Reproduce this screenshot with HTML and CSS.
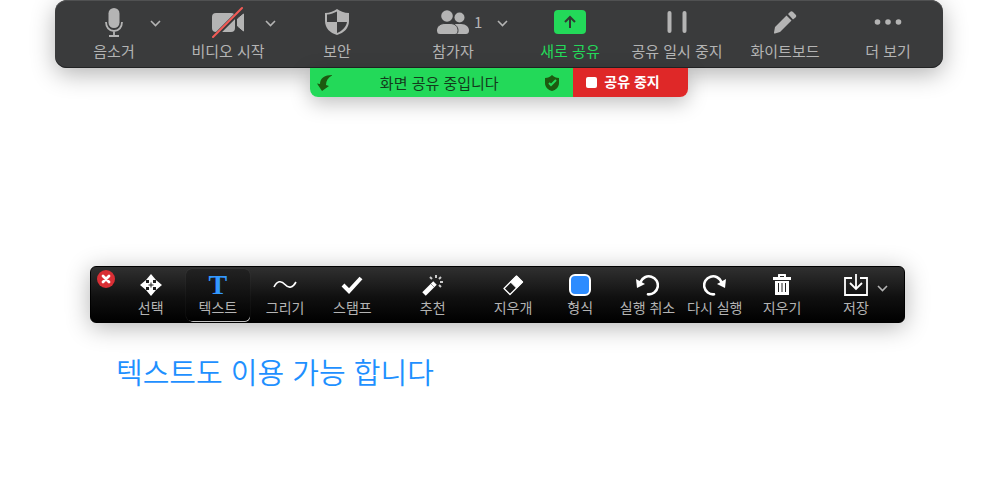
FILE: index.html
```html
<!DOCTYPE html>
<html lang="ko">

<head>
    <meta charset="UTF-8">
    <meta name="viewport" content="width=device-width, initial-scale=1.0">
    <title>화면 공유</title>
    <link rel="stylesheet" href="styles.css">
</head>

<body>
    <header class="meeting">
        <nav class="meeting-bar" aria-label="회의 컨트롤">
            <div class="control">
                <button type="button" class="control-main">
                    <span class="control-icon">
                        <svg width="22" height="32" viewBox="0 0 22 32">
                            <rect x="5.500" y="2" width="11" height="20" rx="5.500" fill="#b4b4b4" />
                            <path d="M3 16c0 5 3 9 8 9s8-4 8-9M11 25v4M6 30h10" fill="none" stroke="#b4b4b4" stroke-width="1.800" />
                        </svg>
                    </span>
                    <span class="control-label">음소거</span>
                </button>
                <button type="button" class="caret" aria-label="오디오 옵션">
                    <svg width="11" height="7" viewBox="0 0 11 7"><path d="M1 1l4.500 4.500L10 1" /></svg>
                </button>
            </div>
            <div class="control">
                <button type="button" class="control-main">
                    <span class="control-icon">
                        <svg width="34" height="32" viewBox="0 0 34 32">
                            <rect x="1" y="7" width="23" height="19" rx="4" fill="#b4b4b4" />
                            <path d="M26.500 13l6-5v17l-6-5z" fill="#b4b4b4" stroke="#b4b4b4" stroke-linejoin="round" />
                            <path d="M3 31L32 2" stroke="#3a3b3c" stroke-width="4.500" />
                            <path d="M2 31L31 2" stroke="#f25b56" stroke-width="2" stroke-linecap="round" />
                        </svg>
                    </span>
                    <span class="control-label">비디오 시작</span>
                </button>
                <button type="button" class="caret" aria-label="비디오 옵션">
                    <svg width="11" height="7" viewBox="0 0 11 7"><path d="M1 1l4.500 4.500L10 1" /></svg>
                </button>
            </div>
            <div class="control">
                <button type="button" class="control-main">
                    <span class="control-icon">
                        <svg width="26" height="28" viewBox="0 0 26 28">
                            <path d="M13 1c3 2 7 4 12 4v8c0 7-5 12-12 14C6 25 1 20 1 13V5c5 0 9-2 12-4z" fill="#b4b4b4" />
                            <path d="M13 3.500V14H3V6.500c4 0 7-1.500 10-3zM13 14h10c-1 5.500-5 9-10 11z" fill="#3a3b3c" />
                        </svg>
                    </span>
                    <span class="control-label">보안</span>
                </button>
            </div>
            <div class="control">
                <button type="button" class="control-main">
                    <span class="control-icon">
                        <svg width="32" height="24" viewBox="0 0 32 24">
                            <g fill="#b4b4b4">
                                <circle cx="22.500" cy="7.500" r="5" />
                                <path d="M18 14h6c5 0 8 3 8 6.500 0 2-1 3.500-3 3.500H18z" />
                                <path d="M8 13.500h5c5 0 8 3 8 7 0 2.500-1 4-3 4H3c-2 0-3.500-1.500-3.500-4 0-4 3.500-7 8.500-7z" stroke="#3a3b3c" />
                                <circle cx="10" cy="6" r="5.800" />
                            </g>
                        </svg>
                        <span class="count">1</span>
                    </span>
                    <span class="control-label">참가자</span>
                </button>
                <button type="button" class="caret caret-wide" aria-label="참가자 옵션">
                    <svg width="11" height="7" viewBox="0 0 11 7"><path d="M1 1l4.500 4.500L10 1" /></svg>
                </button>
            </div>
            <div class="control">
                <button type="button" class="control-main share">
                    <span class="control-icon">
                        <svg width="32" height="24" viewBox="0 0 32 24">
                            <rect width="32" height="24" rx="4" fill="#23d959" />
                            <path d="M16 18V7M11 12l5-5 5 5" fill="none" stroke="#303a32" stroke-width="2" />
                        </svg>
                    </span>
                    <span class="control-label">새로 공유</span>
                </button>
            </div>
            <div class="control">
                <button type="button" class="control-main">
                    <span class="control-icon">
                        <svg width="20" height="22" viewBox="0 0 20 22">
                            <rect x="0.500" y="0" width="4" height="22" rx="2" fill="#b4b4b4" />
                            <rect x="15.500" y="0" width="4" height="22" rx="2" fill="#b4b4b4" />
                        </svg>
                    </span>
                    <span class="control-label">공유 일시 중지</span>
                </button>
            </div>
            <div class="control">
                <button type="button" class="control-main">
                    <span class="control-icon">
                        <svg width="24" height="24" viewBox="0 0 24 24">
                            <path d="M2 17L13.500 5.500l5 5L7 22l-5 1.500c-1 0-1 0-1-1zM15 4l2-2c1-1 2-1 3 0l2.500 2.500c1 1 1 2 0 3L20 9.500z" fill="#b4b4b4" />
                        </svg>
                    </span>
                    <span class="control-label">화이트보드</span>
                </button>
            </div>
            <div class="control">
                <button type="button" class="control-main">
                    <span class="control-icon">
                        <svg width="28" height="6" viewBox="0 0 28 6" fill="#b4b4b4">
                            <circle cx="3.500" cy="3" r="2.800" />
                            <circle cx="14" cy="3" r="2.800" />
                            <circle cx="24.500" cy="3" r="2.800" />
                        </svg>
                    </span>
                    <span class="control-label">더 보기</span>
                </button>
            </div>
        </nav>
        <div class="share-status">
            <div class="share-info">
                <svg width="16" height="16" viewBox="0 0 16 16">
                    <path d="M15 0C8 0 3 3 3 9L0 8.500 5 16l7-5-3-1c0-4 2-7.500 6-9.500z" fill="#1d5a10" />
                </svg>
                <span>화면 공유 중입니다</span>
                <svg width="14" height="16" viewBox="0 0 14 16">
                    <path d="M7 0c2 2 4 3 7 3v5c0 4-3 7-7 8-4-1-7-4-7-8V3c3 0 5-1 7-3z" fill="#1d5a10" />
                    <path d="M4 8l2 2 5-5" fill="none" stroke="#23d959" stroke-width="2" />
                </svg>
            </div>
            <button type="button" class="share-stop"><span class="stop-square"></span>공유 중지</button>
        </div>
    </header>

    <main>
        <div class="annotate-bar" role="toolbar" aria-label="주석 도구">
            <button type="button" class="close" aria-label="닫기">
                <svg width="10" height="10" viewBox="0 0 10 10"><path d="M2 2l6 6M8 2L2 8" stroke="#fff" stroke-width="2.800" stroke-linecap="round" /></svg>
            </button>
            <button type="button" class="tool">
                <span class="tool-icon">
                    <svg width="22" height="22" viewBox="0 0 22 22" fill="#fff">
                        <path d="M11 0l5 6H6zM11 22l5-6H6zM0 11l6-5v10zM22 11l-6-5v10z" />
                        <path d="M9 5h4v4h4v4h-4v4H9v-4H5V9h4z" />
                        <path d="M10.500 8.500h1v2h2v1h-2v2h-1v-2h-2v-1h2z" fill="#222" />
                    </svg>
                </span>
                <span>선택</span>
            </button>
            <button type="button" class="tool tool-selected" aria-pressed="true">
                <span class="tool-icon letter" aria-hidden="true">T</span>
                <span>텍스트</span>
            </button>
            <button type="button" class="tool">
                <span class="tool-icon">
                    <svg width="24" height="12" viewBox="0 0 24 12"><path d="M1 8c3-6 7-7 11-2.500s8 3 11-2.500" fill="none" stroke="#fff" stroke-width="1.600" /></svg>
                </span>
                <span>그리기</span>
            </button>
            <button type="button" class="tool">
                <span class="tool-icon">
                    <svg width="22" height="18" viewBox="0 0 22 18"><path d="M2 9l6 6L20 2" fill="none" stroke="#fff" stroke-width="4" /></svg>
                </span>
                <span>스탬프</span>
            </button>
            <button type="button" class="tool tool-gap">
                <span class="tool-icon">
                    <svg width="22" height="22" viewBox="0 0 22 22" fill="none">
                        <path d="M2 20L13 9" stroke="#fff" stroke-width="5" />
                        <path d="M9 10l3 3" stroke="#999" stroke-width="1" />
                        <path d="M14 4V1M10 5L8 3M17 5l2-2M18 8h3M17 11l2 2" stroke="#ccc" stroke-width="2" />
                    </svg>
                </span>
                <span>추천</span>
            </button>
            <button type="button" class="tool tool-gap">
                <span class="tool-icon">
                    <svg width="22" height="22" viewBox="0 0 22 22">
                        <path d="M14.500 2l6 6L8 20.500l-6-6z" fill="none" stroke="#fff" stroke-width="1.300" stroke-linejoin="round" />
                        <path d="M14.500 2l6 6-6 6-6-6z" fill="#fff" stroke="#fff" stroke-linejoin="round" />
                    </svg>
                </span>
                <span>지우개</span>
            </button>
            <button type="button" class="tool">
                <span class="tool-icon"><span class="swatch"></span></span>
                <span>형식</span>
            </button>
            <button type="button" class="tool">
                <span class="tool-icon">
                    <svg width="24" height="22" viewBox="0 0 24 22">
                        <path d="M5.500 8a9 9 0 1 1 7.500 12.300" fill="none" stroke="#fff" stroke-width="2.600" stroke-linecap="round" />
                        <path d="M1 5l1 9 8-4z" fill="#fff" />
                    </svg>
                </span>
                <span>실행 취소</span>
            </button>
            <button type="button" class="tool">
                <span class="tool-icon">
                    <svg width="24" height="22" viewBox="0 0 24 22">
                        <path d="M18.500 8a9 9 0 1 0-7.500 12.300" fill="none" stroke="#fff" stroke-width="2.600" stroke-linecap="round" />
                        <path d="M23 5l-1 9-8-4z" fill="#fff" />
                    </svg>
                </span>
                <span>다시 실행</span>
            </button>
            <button type="button" class="tool">
                <span class="tool-icon">
                    <svg width="18" height="22" viewBox="0 0 18 22">
                        <path d="M0 3h5V1c0-1 0-1 1-1h6c1 0 1 0 1 1v2h5v3H0zM7 2v1h4V2zM2 7h14v13c0 1 0 1-1 1H3c-1 0-1 0-1-1z" fill="#fff" fill-rule="evenodd" />
                        <path d="M5.500 9v9M9 9v9M12.500 9v9" stroke="#222" stroke-width="1" />
                    </svg>
                </span>
                <span>지우기</span>
            </button>
            <div class="tool tool-save">
                <button type="button" class="tool">
                    <span class="tool-icon">
                        <svg width="24" height="22" viewBox="0 0 24 22" fill="none" stroke="#fff" stroke-width="1.800">
                            <path d="M8 4H1v17h22V4h-7" />
                            <path d="M12 0v15M6 9l6 6 6-6" />
                        </svg>
                    </span>
                    <span>저장</span>
                </button>
                <button type="button" class="caret" aria-label="저장 옵션">
                    <svg width="11" height="7" viewBox="0 0 11 7"><path d="M1 1l4.500 4.500L10 1" /></svg>
                </button>
            </div>
        </div>
        <p class="note">텍스트도 이용 가능 합니다</p>
    </main>
</body>

</html>
```
FILE: styles.css
```css
body {
    font-family: "Noto Sans CJK KR", sans-serif;
    background-color: #ffffff;
    margin: 0;
}

button {
    padding: 0;
    border: none;
    background: none;
    color: inherit;
    font: inherit;
    white-space: nowrap;
    cursor: pointer;
}

svg {
    display: block;
    flex-shrink: 0;
}

.meeting {
    margin: 0 57px 0 55px;
}

.meeting-bar {
    display: grid;
    grid-template-columns: 118fr 110fr 108fr 124fr 110fr 104fr 112fr 94fr;
    box-sizing: border-box;
    padding: 6px 8px 6px 0;
    border-radius: 12px;
    background-color: #3a3b3c;
    color: #b4b4b4;
    box-shadow: inset 0 1px 0 #505152, inset 0 -1px 0 #222324, 0 6px 24px rgba(0, 0, 0, 0.3);
    font-size: 15px;
    line-height: 22px;
}

.control {
    display: grid;
    grid-template-columns: 1fr auto 1fr;
    align-items: start;
}

.control-main {
    grid-column: 2;
    min-width: 72px;
}

.control-icon {
    display: grid;
    grid-template-columns: 1fr auto 1fr;
    align-items: center;
    height: 32px;
    margin-bottom: 2px;
}

.control-icon svg {
    grid-column: 2;
}

.control-label {
    display: block;
}

.count {
    justify-self: start;
    padding-left: 5px;
}

.caret {
    display: flex;
    align-items: center;
    justify-self: start;
    height: 34px;
}

.caret-wide {
    margin-left: 8px;
}

.caret path {
    fill: none;
    stroke: #b4b4b4;
    stroke-width: 1.6;
}

.share {
    color: #23d959;
}

.share-status {
    display: flex;
    width: fit-content;
    margin: 0 auto;
    border-radius: 0 0 8px 8px;
    overflow: hidden;
    box-shadow: 0 6px 20px rgba(0, 0, 0, 0.25);
}

.share-info {
    display: flex;
    align-items: center;
    justify-content: space-between;
    box-sizing: border-box;
    min-width: 263px;
    padding: 0 14px 0 7px;
    background-color: #23d959;
    color: #143a1c;
    font-size: 15px;
    line-height: 29px;
}

.share-stop {
    display: flex;
    align-items: center;
    gap: 7px;
    padding: 0 28px 3px 13px;
    background-color: #df2828;
    color: #ffffff;
    font-size: 14px;
    font-weight: 700;
}

.stop-square {
    width: 11px;
    height: 11px;
    margin-top: 3px;
    border-radius: 2px;
    background-color: #ffffff;
}

.annotate-bar {
    position: relative;
    display: flex;
    margin: 169px 95px 0 90px;
    padding: 2px 14px 1px 26px;
    border: 1px solid #000000;
    box-sizing: border-box;
    border-radius: 6px;
    background: linear-gradient(#303030, #101010 55%, #000000);
    box-shadow: 0 4px 24px rgba(0, 0, 0, 0.3);
    color: #b4b4b4;
    font-size: 14px;
    line-height: 20px;
}

.tool {
    flex: 1 1 0;
    min-width: 0;
    margin: 0 2px;
    padding: 4px 0;
    text-align: center;
}

.tool > span {
    display: block;
    margin: 0 -4px;
}

.tool > .tool-icon {
    display: flex;
    align-items: center;
    justify-content: center;
    height: 24px;
}

.tool-gap {
    margin-left: 15px;
}

.tool-selected {
    border-radius: 6px;
    background: linear-gradient(#222222, #000000);
    box-shadow: 0 0 1px #555555, 1px 2px 0 -1px #d0d0d0;
}

.letter {
    color: #3399ff;
    font-family: "Liberation Serif", serif;
    font-size: 28px;
    font-weight: 700;
}

.swatch {
    width: 18px;
    height: 18px;
    border: 2px solid #ffffff;
    border-radius: 6px;
    background-color: #2d8cff;
}

.tool-save {
    display: grid;
    grid-template-columns: 1fr auto 1fr;
    margin-left: 9px;
    padding: 0;
}

.tool-save .tool {
    grid-column: 2;
    min-width: 38px;
}

.close {
    position: absolute;
    top: 3px;
    left: 6px;
    display: grid;
    place-items: center;
    width: 18px;
    height: 18px;
    border-radius: 50%;
    background-color: #d92f35;
}

.annotate-bar .caret {
    height: 38px;
}

.note {
    margin: 26px 116px 0;
    color: #1e90ff;
    font-size: 29px;
    font-weight: 350;
    line-height: 44px;
}
```
